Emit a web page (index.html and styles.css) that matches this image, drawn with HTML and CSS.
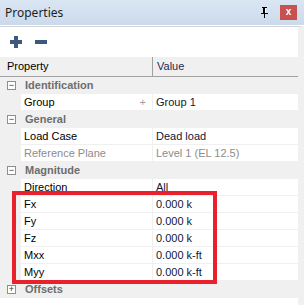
FILE: index.html
```html
<!DOCTYPE html>
<html lang="en">
<head>
  <meta charset="UTF-8">
  <title>Properties</title>
  <link rel="stylesheet" href="styles.css">
</head>
<body>
  <div class="ventana">

    <!-- Barra de título -->
    <div class="titulo">
      <span class="titulo-texto">Properties</span>
      <svg class="pin" width="9" height="11" viewBox="0 0 9 11">
        <path d="M2 0h5v1h-1v5h2v1h-7v-1h2v-5h-1z M4 7h1v4h-1z" fill="#000"/>
        <path d="M5 1h1v5h-1z" fill="#fff"/>
      </svg>
      <span class="cerrar">x</span>
    </div>

    <div class="panel">
      <!-- Botones agregar / quitar -->
      <div class="herramientas">
        <svg width="14" height="14" viewBox="0 0 14 14"><path d="M5 1h4v4h4v4h-4v4h-4v-4h-4v-4h4z" fill="#3c5a7c"/></svg>
        <svg width="14" height="14" viewBox="0 0 14 14"><path d="M1 5h12v4h-12z" fill="#3c5a7c"/></svg>
      </div>

      <div class="grilla">
        <div class="encabezado">
          <div class="col-prop">Property</div>
          <div class="col-valor">Value</div>
        </div>

        <div class="categoria"><span class="caja">−</span>Identification</div>
        <div class="fila">
          <div class="prop">Group<span class="mas">+</span></div>
          <div class="valor">Group 1</div>
        </div>

        <div class="categoria"><span class="caja">−</span>General</div>
        <div class="fila">
          <div class="prop">Load Case</div>
          <div class="valor">Dead load</div>
        </div>
        <div class="fila inactiva">
          <div class="prop">Reference Plane</div>
          <div class="valor">Level 1 (EL 12.5)</div>
        </div>

        <div class="categoria"><span class="caja">−</span>Magnitude</div>
        <div class="fila">
          <div class="prop">Direction</div>
          <div class="valor">All</div>
        </div>
        <div class="fila">
          <div class="prop">Fx</div>
          <div class="valor">0.000 k</div>
        </div>
        <div class="fila">
          <div class="prop">Fy</div>
          <div class="valor">0.000 k</div>
        </div>
        <div class="fila">
          <div class="prop">Fz</div>
          <div class="valor">0.000 k</div>
        </div>
        <div class="fila">
          <div class="prop">Mxx</div>
          <div class="valor">0.000 k-ft</div>
        </div>
        <div class="fila">
          <div class="prop">Myy</div>
          <div class="valor">0.000 k-ft</div>
        </div>

        <div class="categoria"><span class="caja">+</span>Offsets</div>

        <!-- Recuadro rojo de resaltado -->
        <div class="resaltado"></div>
      </div>
    </div>
  </div>
</body>
</html>
```

FILE: styles.css
```css
body {
  margin: 0;
  font-family: "Liberation Sans", Arial, sans-serif;
  font-size: 11px;
  background-color: #ffffff;
}
.ventana {
  width: 304px;
  height: 305px;
  overflow: hidden;
  background-color: #ffffff;
}
.titulo {
  height: 25px;
  display: flex;
  align-items: center;
  background: linear-gradient(#dbe6f3, #cbdaec);
  border-bottom: 1px solid #ffffff;
}
.titulo-texto {
  font-family: "Noto Sans", sans-serif;
  font-size: 12px;
  color: #1e1e1e;
  padding-left: 5px;
  flex: 1;
}
.pin {
  margin-right: 11px;
}
.cerrar {
  width: 17px;
  height: 15px;
  background-color: #c75050;
  color: #ffffff;
  font-weight: bold;
  font-size: 10px;
  line-height: 13px;
  text-align: center;
  margin-right: 7px;
}
.panel {
  border-top: 1px solid #d4d4d4;
  border-right: 6px solid #f0f0f0;
  height: 279px;
}
.herramientas {
  height: 30px;
  display: flex;
  align-items: center;
  gap: 11px;
  padding-left: 9px;
  box-sizing: border-box;
}
.grilla {
  position: relative;
  background-color: #f0f0f0;
}
.encabezado {
  display: flex;
  height: 19px;
  border-bottom: 1px solid #a0a0a0;
  line-height: 19px;
}
.col-prop {
  width: 145px;
  padding-left: 7px;
  border-right: 1px solid #a0a0a0;
}
.col-valor {
  padding-left: 4px;
  color: #1b2a52;
}
.categoria {
  height: 17px;
  line-height: 17px;
  font-weight: bold;
  color: #6d6d6d;
  display: flex;
  align-items: center;
}
.caja {
  width: 7px;
  height: 7px;
  border: 1px solid #8f8f8f;
  background: #ffffff;
  font-size: 9px;
  line-height: 7px;
  text-align: center;
  color: #333333;
  font-weight: normal;
  margin: 0 9px 0 7px;
}
.fila {
  display: flex;
  height: 16px;
  line-height: 16px;
  border-bottom: 1px solid #f0f0f0;
  margin-left: 21px;
  color: #000000;
}
.prop {
  width: 128px;
  padding-left: 3px;
  background-color: #ffffff;
  display: flex;
  margin-right: 1px;
}
.mas {
  margin-left: auto;
  margin-right: 6px;
  color: #a0a0a0;
}
.valor {
  flex: 1;
  padding-left: 3px;
  background-color: #ffffff;
  color: #101838;
}
.inactiva .prop, .inactiva .valor {
  color: #8c8c8c;
}
.resaltado {
  position: absolute;
  left: 12px;
  top: 134px;
  width: 197px;
  height: 85px;
  border: 4px solid #e8212c;
}
```
